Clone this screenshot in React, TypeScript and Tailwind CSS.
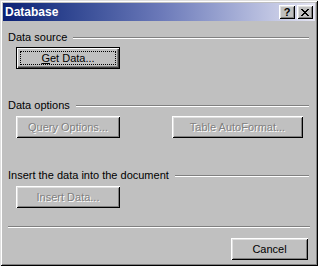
import React from "react";

const font = "font-['Liberation_Sans',Arial,sans-serif]";
const raised =
  "shadow-[inset_1px_1px_0_#fff,inset_-1px_-1px_0_#000,inset_2px_2px_0_#dfdfdf,inset_-2px_-2px_0_#808080]";
const disabledText = "text-[#808080] [text-shadow:1px_1px_0_#fff]";

function Etched({ className = "" }: { className?: string }) {
  return <div className={`h-0 border-t border-b border-t-[#808080] border-b-white ${className}`} />;
}

function SectionLabel({ text }: { text: string }) {
  return (
    <div className="flex items-center h-[13px]">
      <span className="text-[11px] leading-[13px] text-black whitespace-nowrap">{text}</span>
      <Etched className="flex-1 ml-[6px]" />
    </div>
  );
}

function DisabledButton({ label, w }: { label: string; w: string }) {
  return (
    <div className={`flex items-center justify-center h-[22px] ${w} ${raised} text-[11px] ${disabledText}`}>
      {label}
    </div>
  );
}

export default function App() {
  return (
    <div
      className={`${font} w-[318px] h-[266px] bg-[#c0c0c0] p-[3px] flex flex-col shadow-[inset_1px_1px_0_#dfdfdf,inset_-1px_-1px_0_#000,inset_2px_2px_0_#fff,inset_-2px_-2px_0_#808080]`}
    >
      {/* Title bar */}
      <div className="h-[18px] flex items-center bg-gradient-to-r from-[#0a1f74] via-[#6a78b8] to-[#e4e4f2] pl-[2px] pr-[2px]">
        <span className="text-white font-bold text-[12px] leading-[14px] flex-1">Database</span>
        <div className={`w-[16px] h-[14px] bg-[#c0c0c0] ${raised} flex items-center justify-center text-black font-bold text-[11px] leading-none pt-[1px]`}>
          ?
        </div>
        <div className={`ml-[2px] w-[16px] h-[14px] bg-[#c0c0c0] ${raised} flex items-center justify-center`}>
          <svg width="8" height="7" viewBox="0 0 8 7" shapeRendering="crispEdges">
            <path d="M0 0h2v1h-2zM6 0h2v1h-2zM1 1h2v1h-2zM5 1h2v1h-2zM2 2h4v1h-4zM3 3h2v1h-2zM2 4h4v1h-4zM1 5h2v1h-2zM5 5h2v1h-2zM0 6h2v1h-2zM6 6h2v1h-2z" fill="#000" />
          </svg>
        </div>
      </div>

      {/* Content */}
      <div className="flex flex-col pl-[5px] pr-[6px]">
        <div className="mt-[10px]">
          <SectionLabel text="Data source" />
        </div>
        <div className="mt-[3px] pl-[8px]">
          <div className="w-[104px] h-[22px] border border-black">
            <div className="w-full h-full shadow-[inset_1px_1px_0_#fff,inset_-1px_-1px_0_#404040,inset_-2px_-2px_0_#808080] p-[3px]">
              <div className="w-full h-full border border-dotted border-black flex items-center justify-center text-[11px] text-black">
                <span>
                  <span className="underline">G</span>et Data...
                </span>
              </div>
            </div>
          </div>
        </div>

        <div className="mt-[30px]">
          <SectionLabel text="Data options" />
        </div>
        <div className="mt-[4px] pl-[8px] flex gap-[52px]">
          <DisabledButton label="Query Options..." w="w-[104px]" />
          <DisabledButton label="Table AutoFormat..." w="w-[131px]" />
        </div>

        <div className="mt-[31px]">
          <SectionLabel text="Insert the data into the document" />
        </div>
        <div className="mt-[4px] pl-[8px]">
          <DisabledButton label="Insert Data..." w="w-[104px]" />
        </div>

        <Etched className="mt-[18px] mr-[-1px]" />

        <div className="mt-[10px] flex justify-end pr-[1px]">
          <div className={`w-[77px] h-[22px] ${raised} flex items-center justify-center text-[11px] text-black`}>
            Cancel
          </div>
        </div>
      </div>
    </div>
  );
}
